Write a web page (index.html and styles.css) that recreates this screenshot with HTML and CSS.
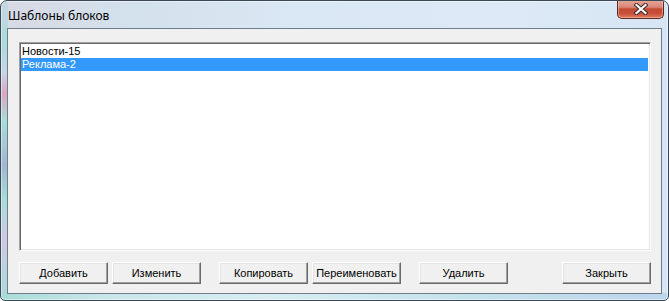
FILE: index.html
```html
<!DOCTYPE html>
<html lang="ru">
<head>
    <meta charset="UTF-8">
    <title>Шаблоны блоков</title>
    <link rel="stylesheet" href="styles.css">
</head>
<body>

    <div class="window">
        <!-- Заголовок окна -->
        <div class="titlebar">
            <span class="title">Шаблоны блоков</span>
        </div>

        <!-- Кнопка закрытия поверх рамки -->
        <div class="close-btn">
            <svg width="14" height="12" viewBox="0 0 14 12">
                <path d="M2.5 2 L11.5 10 M11.5 2 L2.5 10" stroke="#3b2a2a" stroke-width="4.2" stroke-linecap="square"/>
                <path d="M2.5 2 L11.5 10 M11.5 2 L2.5 10" stroke="#ffffff" stroke-width="2.2" stroke-linecap="square"/>
            </svg>
        </div>

        <div class="client">
            <!-- Список шаблонов -->
            <div class="listbox">
                <div class="list-item">Новости-15</div>
                <div class="list-item selected">Реклама-2</div>
            </div>

            <!-- Кнопки -->
            <div class="buttons">
                <div class="btn-group">
                    <button class="btn">Добавить</button>
                    <button class="btn">Изменить</button>
                </div>
                <div class="btn-group">
                    <button class="btn">Копировать</button>
                    <button class="btn">Переименовать</button>
                </div>
                <div class="btn-group">
                    <button class="btn">Удалить</button>
                </div>
                <div class="btn-group last">
                    <button class="btn">Закрыть</button>
                </div>
            </div>
        </div>
    </div>

</body>
</html>
```

FILE: styles.css
```css
body {
    margin: 0;
    background: #ffffff;
    font-family: "Liberation Sans", Arial, sans-serif;
}

.window {
    width: 669px;
    height: 301px;
    box-sizing: border-box;
    position: relative;
    display: flex;
    flex-direction: column;
    border: 1px solid #3b4856;
    border-radius: 7px 7px 5px 5px;
    background:
        linear-gradient(to bottom, #c9d6e2 0%, #a9dcd9 14%, #c8d4e6 24%, #d9a6c0 31%, #a8ddd9 40%, #a2b6d2 55%, #a7dcd8 66%, #cfc8e2 80%, #a4dcd6 100%) left top / 7px 100% no-repeat,
        linear-gradient(to right, #a9dcd8 0%, #c8e6ea 15%, #d8ecf2 40%, #c4e2ea 70%, #bcd6ec 100%) left bottom / 100% 7px no-repeat,
        linear-gradient(to right, #d8d9e4 0%, #d3e1ec 18%, #dae7f4 45%, #dde9f6 75%, #d6e5f4 100%);
    box-shadow: inset 0 0 0 1px rgba(255, 255, 255, 0.45);
    overflow: hidden;
}

.titlebar {
    height: 27px;
    display: flex;
    align-items: center;
    padding-left: 7px;
}

.title {
    font-family: "Noto Sans", "Open Sans", sans-serif;
    font-size: 12px;
    color: #000000;
    padding-top: 1px;
}

.close-btn {
    position: absolute;
    top: -1px;
    right: 4px;
    width: 47px;
    height: 19px;
    box-sizing: border-box;
    display: flex;
    align-items: center;
    justify-content: center;
    border: 1px solid #5b2a24;
    border-top: none;
    border-radius: 0 0 5px 5px;
    background: linear-gradient(to bottom, #e7a99c 0%, #d98677 40%, #c34a32 50%, #c8503a 75%, #e07a5e 100%);
    box-shadow: inset 0 0 0 1px rgba(255, 210, 200, 0.45);
}

.close-btn svg {
    display: block;
}

.client {
    flex: 1;
    margin: 0 6px 6px;
    border: 1px solid #6f7d8c;
    background: #f0f0f0;
    padding: 13px 10px 9px 11px;
    display: flex;
    flex-direction: column;
}

.listbox {
    height: 209px;
    box-sizing: border-box;
    background: #ffffff;
    border: 1px solid;
    border-color: #a0a0a0 #ffffff #ffffff #a0a0a0;
    box-shadow: inset 1px 1px 0 #696969, inset -1px -1px 0 #e3e3e3;
    padding: 2px 2px 0 1px;
}

.list-item {
    height: 13px;
    line-height: 13px;
    font-size: 11px;
    color: #000000;
    padding-left: 1px;
}

.list-item.selected {
    background: #3399ff;
    color: #ffffff;
}

.buttons {
    display: flex;
    gap: 18px;
    margin-top: 11px;
}

.btn-group {
    display: flex;
    gap: 4px;
}

.btn-group.last {
    margin-left: auto;
}

.btn {
    width: 89px;
    height: 22px;
    box-sizing: border-box;
    margin: 0;
    padding: 0;
    font-family: "Liberation Sans", Arial, sans-serif;
    font-size: 11px;
    color: #000000;
    background: #f0f0f0;
    border: 1px solid;
    border-color: #ffffff #696969 #696969 #ffffff;
    box-shadow: inset -1px -1px 0 #a0a0a0, inset 1px 1px 0 #e3e3e3;
}
```
